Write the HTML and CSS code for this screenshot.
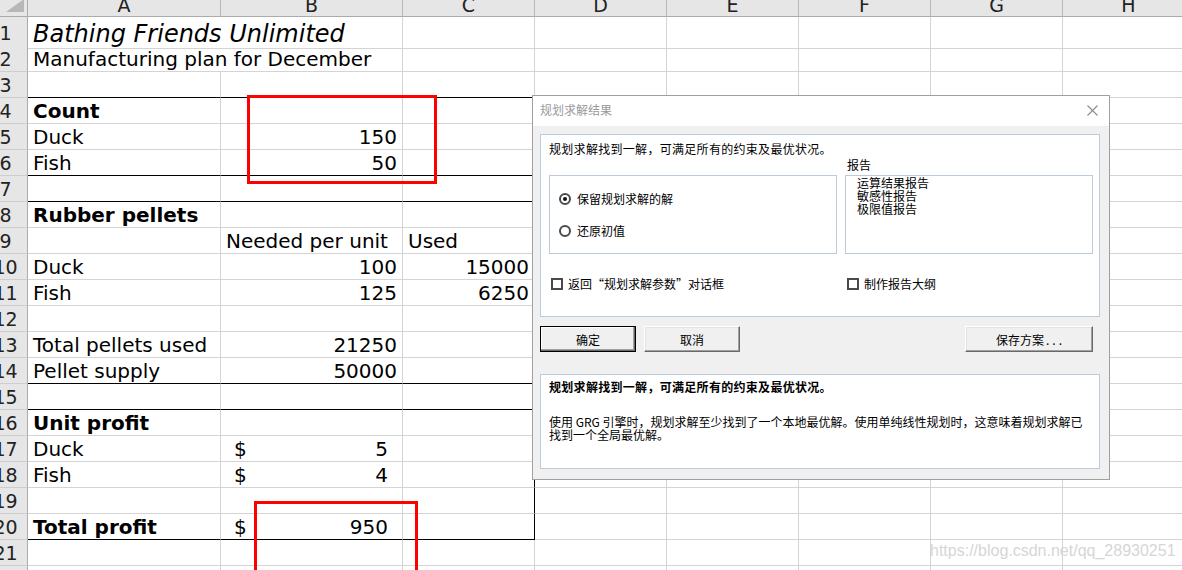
FILE: index.html
```html
<!DOCTYPE html>
<html lang="zh-CN">
<head>
<meta charset="utf-8">
<title>Bathing Friends Unlimited</title>
<link rel="stylesheet" href="styles.css">
</head>
<body>
<div class="sheet">
  <div class="row hdr">
    <div class="corner"><svg class="tri" width="18" height="13" viewBox="0 0 18 13"><polygon points="18,0 18,13 0,13" fill="#b7b7b7"/></svg></div>
    <div class="ch">A</div><div class="ch">B</div><div class="ch">C</div><div class="ch">D</div><div class="ch">E</div><div class="ch">F</div><div class="ch">G</div><div class="ch">H</div>
  </div>
  <div class="row r1">
    <div class="rh">1</div><div class="c span2 title">Bathing Friends Unlimited</div><div class="c"></div><div class="c"></div><div class="c"></div><div class="c"></div><div class="c"></div><div class="c"></div>
  </div>
  <div class="row">
    <div class="rh">2</div><div class="c span2">Manufacturing plan for December</div><div class="c"></div><div class="c"></div><div class="c"></div><div class="c"></div><div class="c"></div><div class="c"></div>
  </div>
  <div class="row">
    <div class="rh">3</div><div class="c bb"></div><div class="c bb"></div><div class="c bb"></div><div class="c"></div><div class="c"></div><div class="c"></div><div class="c"></div><div class="c"></div>
  </div>
  <div class="row">
    <div class="rh">4</div><div class="c b">Count</div><div class="c"></div><div class="c br"></div><div class="c"></div><div class="c"></div><div class="c"></div><div class="c"></div><div class="c"></div>
  </div>
  <div class="row">
    <div class="rh">5</div><div class="c">Duck</div><div class="c num">150</div><div class="c br"></div><div class="c"></div><div class="c"></div><div class="c"></div><div class="c"></div><div class="c"></div>
  </div>
  <div class="row">
    <div class="rh">6</div><div class="c bb">Fish</div><div class="c num bb">50</div><div class="c br bb"></div><div class="c"></div><div class="c"></div><div class="c"></div><div class="c"></div><div class="c"></div>
  </div>
  <div class="row">
    <div class="rh">7</div><div class="c bb"></div><div class="c bb"></div><div class="c br bb"></div><div class="c"></div><div class="c"></div><div class="c"></div><div class="c"></div><div class="c"></div>
  </div>
  <div class="row">
    <div class="rh">8</div><div class="c b">Rubber pellets</div><div class="c"></div><div class="c br"></div><div class="c"></div><div class="c"></div><div class="c"></div><div class="c"></div><div class="c"></div>
  </div>
  <div class="row">
    <div class="rh">9</div><div class="c"></div><div class="c">Needed per unit</div><div class="c br">Used</div><div class="c"></div><div class="c"></div><div class="c"></div><div class="c"></div><div class="c"></div>
  </div>
  <div class="row">
    <div class="rh">10</div><div class="c">Duck</div><div class="c num">100</div><div class="c num br">15000</div><div class="c"></div><div class="c"></div><div class="c"></div><div class="c"></div><div class="c"></div>
  </div>
  <div class="row">
    <div class="rh">11</div><div class="c">Fish</div><div class="c num">125</div><div class="c num br">6250</div><div class="c"></div><div class="c"></div><div class="c"></div><div class="c"></div><div class="c"></div>
  </div>
  <div class="row">
    <div class="rh">12</div><div class="c"></div><div class="c"></div><div class="c br"></div><div class="c"></div><div class="c"></div><div class="c"></div><div class="c"></div><div class="c"></div>
  </div>
  <div class="row">
    <div class="rh">13</div><div class="c">Total pellets used</div><div class="c num">21250</div><div class="c br"></div><div class="c"></div><div class="c"></div><div class="c"></div><div class="c"></div><div class="c"></div>
  </div>
  <div class="row">
    <div class="rh">14</div><div class="c bb">Pellet supply</div><div class="c num bb">50000</div><div class="c br bb"></div><div class="c"></div><div class="c"></div><div class="c"></div><div class="c"></div><div class="c"></div>
  </div>
  <div class="row">
    <div class="rh">15</div><div class="c bb"></div><div class="c bb"></div><div class="c br bb"></div><div class="c"></div><div class="c"></div><div class="c"></div><div class="c"></div><div class="c"></div>
  </div>
  <div class="row">
    <div class="rh">16</div><div class="c b">Unit profit</div><div class="c"></div><div class="c br"></div><div class="c"></div><div class="c"></div><div class="c"></div><div class="c"></div><div class="c"></div>
  </div>
  <div class="row">
    <div class="rh">17</div><div class="c">Duck</div><div class="c acct"><span>$</span><span>5</span></div><div class="c br"></div><div class="c"></div><div class="c"></div><div class="c"></div><div class="c"></div><div class="c"></div>
  </div>
  <div class="row">
    <div class="rh">18</div><div class="c">Fish</div><div class="c acct"><span>$</span><span>4</span></div><div class="c br"></div><div class="c"></div><div class="c"></div><div class="c"></div><div class="c"></div><div class="c"></div>
  </div>
  <div class="row">
    <div class="rh">19</div><div class="c"></div><div class="c"></div><div class="c br"></div><div class="c"></div><div class="c"></div><div class="c"></div><div class="c"></div><div class="c"></div>
  </div>
  <div class="row">
    <div class="rh">20</div><div class="c b bb">Total profit</div><div class="c acct bb"><span>$</span><span>950</span></div><div class="c br bb"></div><div class="c"></div><div class="c"></div><div class="c"></div><div class="c"></div><div class="c"></div>
  </div>
  <div class="row">
    <div class="rh">21</div><div class="c"></div><div class="c"></div><div class="c"></div><div class="c"></div><div class="c"></div><div class="c"></div><div class="c"></div><div class="c"></div>
  </div>
  <div class="row">
    <div class="rh">22</div><div class="c"></div><div class="c"></div><div class="c"></div><div class="c"></div><div class="c"></div><div class="c"></div><div class="c"></div><div class="c"></div>
  </div>
</div>

<div class="mark mark-count"></div>
<div class="mark mark-profit"></div>

<div class="dlg">
  <div class="dlg-title">
    <span>规划求解结果</span>
    <svg class="close" width="11" height="11" viewBox="0 0 11 11"><path d="M0.5 0.5 L10.5 10.5 M10.5 0.5 L0.5 10.5" stroke="#8c8c8c" stroke-width="1.1" fill="none"/></svg>
  </div>
  <div class="dlg-body">
    <div class="panel panel-top">
      <div class="msg">规划求解找到一解，可满足所有的约束及最优状况。</div>
      <div class="opts">
        <div class="lbl">报告</div>
        <div class="box radios">
          <div class="radio-row"><span class="radio on"></span><span>保留规划求解的解</span></div>
          <div class="radio-row"><span class="radio"></span><span>还原初值</span></div>
        </div>
        <div class="box list">
          <div>运算结果报告</div>
          <div>敏感性报告</div>
          <div>极限值报告</div>
        </div>
        <div class="chk"><span class="cbox"></span><span>返回“规划求解参数”对话框</span></div>
        <div class="chk"><span class="cbox"></span><span>制作报告大纲</span></div>
      </div>
    </div>
    <div class="btns">
      <div class="btn def">确定</div>
      <div class="btn">取消</div>
      <div class="btn save">保存方案<span class="dots">...</span></div>
    </div>
    <div class="panel panel-bottom">
      <div class="msg strong">规划求解找到一解，可满足所有的约束及最优状况。</div>
      <div class="para">使用 GRG 引擎时，规划求解至少找到了一个本地最优解。使用单纯线性规划时，这意味着规划求解已<br>找到一个全局最优解。</div>
    </div>
  </div>
</div>

<div class="watermark">https://blog.csdn.net/qq_28930251</div>
</body>
</html>
```

FILE: styles.css
```css
html, body {
  margin: 0;
  padding: 0;
  width: 1182px;
  height: 570px;
  overflow: hidden;
  background: #ffffff;
}

body {
  position: relative;
  font-family: "DejaVu Sans", Verdana, sans-serif;
  color: #000;
}

/* ---------- spreadsheet ---------- */
.sheet {
  margin: -7px 0 0 -16px;
  font-size: 20px;
}

.row {
  display: grid;
  grid-template-columns: 44px 193px 182px 132px 132px 132px 132px 132px 132px;
  height: 26px;
}

.row.hdr { height: 24px; }
.row.r1 { height: 29px; }

.corner {
  background: #e6e6e6;
  border-right: 1px solid #ababab;
  border-bottom: 1px solid #ababab;
  display: flex;
  align-items: flex-end;
  justify-content: flex-end;
  padding: 0 3px 4px 0;
}

.tri { display: block; }

.ch {
  background: #e6e6e6;
  border-right: 1px solid #b9b9b9;
  border-bottom: 1px solid #ababab;
  display: flex;
  align-items: center;
  justify-content: center;
  font-size: 19px;
  color: #222;
}

.rh {
  background: #e6e6e6;
  border-right: 1px solid #ababab;
  border-bottom: 1px solid #cdcdcd;
  display: flex;
  align-items: center;
  justify-content: center;
  font-size: 19px;
  color: #222;
  padding-top: 1px;
}

.c {
  border-right: 1px solid #d4d4d4;
  border-bottom: 1px solid #d4d4d4;
  padding: 1px 5px 0;
  display: flex;
  align-items: center;
  white-space: nowrap;
  min-width: 0;
}

.span2 { grid-column: span 2; }

.title {
  font-style: italic;
  font-size: 24px;
  padding-top: 3px;
}

.b { font-weight: bold; }

.num { justify-content: flex-end; }

.acct {
  justify-content: space-between;
  padding: 1px 14px 0 13px;
}

.bb { border-bottom-color: #000; }
.br { border-right-color: #000; }

/* ---------- red annotation boxes ---------- */
.mark {
  position: absolute;
  border: 3px solid #ff0000;
  box-sizing: border-box;
}

.mark-count {
  left: 247px;
  top: 95px;
  width: 190px;
  height: 89px;
}

.mark-profit {
  left: 254px;
  top: 501px;
  width: 164px;
  height: 80px;
}

/* ---------- dialog ---------- */
.dlg {
  position: absolute;
  left: 532px;
  top: 95px;
  width: 578px;
  height: 385px;
  box-sizing: border-box;
  border: 1px solid #a0a0a0;
  background: #f0f0f0;
  font-family: "Noto Sans CJK SC", "Noto Sans", sans-serif;
  font-size: 12px;
  color: #000;
}

.dlg-title {
  height: 30px;
  background: #ffffff;
  display: flex;
  align-items: center;
  padding: 0 11px 3px 7px;
  box-sizing: border-box;
  color: #9a9a9a;
  font-size: 12px;
}

.close { margin-left: auto; display: block; margin-top: 2px; }

.dlg-body {
  padding: 8px 9px 0 7px;
}

.panel {
  background: #ffffff;
  border: 1px solid #bccbdc;
  box-sizing: border-box;
}

.panel-top {
  height: 183px;
  padding: 7px 0 0 8px;
}

.msg {
  line-height: 14px;
  height: 14px;
  white-space: nowrap;
  letter-spacing: 0.3px;
}

.strong { font-weight: bold; }

.opts {
  margin-top: 2px;
  display: grid;
  grid-template-columns: 288px 248px;
  grid-template-rows: 14px 79px 34px;
  column-gap: 8px;
  row-gap: 3px;
}

.lbl {
  grid-column: 2;
  grid-row: 1;
  line-height: 14px;
  padding-left: 2px;
}

.box {
  border: 1px solid #bccbdc;
  box-sizing: border-box;
  grid-row: 2;
}

.radios {
  grid-column: 1;
  padding: 16px 0 0 9px;
  display: flex;
  flex-direction: column;
  gap: 18px;
}

.radio-row {
  display: flex;
  align-items: center;
  gap: 6px;
  line-height: 14px;
  height: 14px;
}

.radio {
  width: 12px;
  height: 12px;
  box-sizing: border-box;
  border: 2px solid #4a4a4a;
  border-radius: 50%;
  background: #fff;
  display: flex;
  align-items: center;
  justify-content: center;
}

.radio.on::after {
  content: "";
  width: 4px;
  height: 4px;
  border-radius: 50%;
  background: #111;
}

.list {
  grid-column: 2;
  padding: 0 0 0 11px;
  line-height: 13px;
}

.chk {
  grid-row: 3;
  align-self: end;
  height: 14px;
  margin-left: 2px;
  display: flex;
  align-items: center;
  gap: 5px;
  line-height: 14px;
  white-space: nowrap;
}

.cbox {
  width: 12px;
  height: 12px;
  box-sizing: border-box;
  border: 2px solid #4a4a4a;
  background: #fff;
}

.btns {
  display: flex;
  gap: 8px;
  margin-top: 9px;
  height: 26px;
}

.btn {
  width: 96px;
  height: 26px;
  box-sizing: border-box;
  background: #f0f0f0;
  border: 1px solid;
  border-color: #ffffff #696969 #696969 #ffffff;
  box-shadow: inset -1px -1px #a0a0a0, inset 1px 1px #e3e3e3;
  display: flex;
  align-items: center;
  justify-content: center;
}

.btn.def {
  border-color: #000000;
  box-shadow: inset -1px -1px #696969, inset -2px -2px #a0a0a0, inset 1px 1px #ffffff;
}

.btn.save {
  width: 128px;
  margin-left: auto;
  margin-right: 7px;
}

.dots {
  letter-spacing: 3px;
  margin-left: 2px;
  margin-right: -3px;
}

.panel-bottom {
  margin-top: 22px;
  height: 95px;
  padding: 5px 0 0 8px;
}

.para {
  margin-top: 21px;
  line-height: 13px;
  white-space: nowrap;
}

/* ---------- watermark ---------- */
.watermark {
  position: absolute;
  left: 930px;
  top: 541px;
  line-height: 20px;
  font-family: "Liberation Sans", Arial, sans-serif;
  font-size: 16px;
  color: #d6d6d6;
}
```
